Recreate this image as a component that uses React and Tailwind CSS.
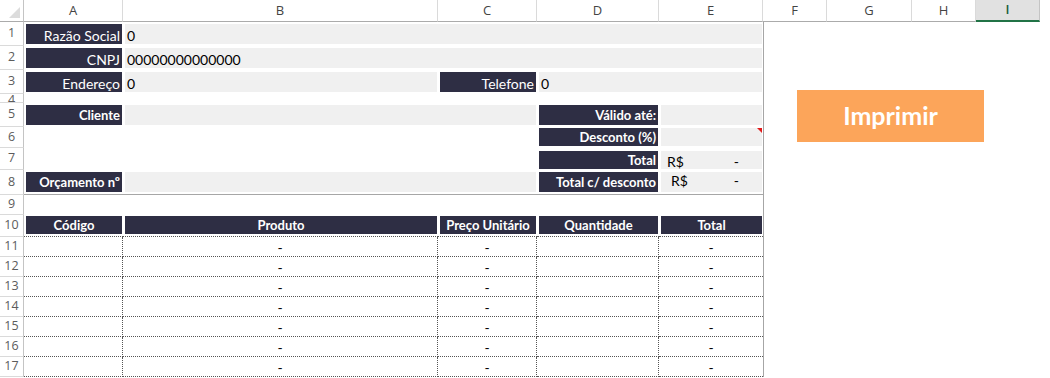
import clsx from 'clsx';

const columns = ['A', 'B', 'C', 'D', 'E', 'F', 'G', 'H', 'I'];

const RowNum = ({ n, className = '' }) => (
  <div
    className={clsx(
      "flex items-center justify-center overflow-hidden border-r border-b border-r-[#c4c4c4] border-b-[#dadada] font-['Open_Sans',sans-serif] text-[12.5px] leading-none text-[#5c5c5c]",
      className
    )}
  >
    {n}
  </div>
);

const Cell = ({ span = '', fill, align = 'left', bold, className = '', inner = '', children }) => (
  <div className={clsx('min-w-0 pl-[2px] pr-px py-[2px]', span, className)}>
    <div
      className={clsx(
        'relative flex h-full items-center overflow-hidden whitespace-nowrap px-[2px] pt-[2px]',
        fill === 'dark' && 'bg-[#2e2e44] text-white',
        fill === 'light' && 'bg-[#f0f0f0] text-black',
        align === 'right' && 'justify-end',
        align === 'center' && 'justify-center',
        bold ? 'text-[13px] font-bold' : 'text-[14px]',
        inner
      )}
    >
      {children}
    </div>
  </div>
);

const Money = ({ pad = 'pl-[4px]' }) => (
  <span className={clsx('flex w-full justify-between pr-[21px]', pad)}>
    <span>R$</span>
    <span>-</span>
  </span>
);

const App = () => {
  const itemRows = [11, 12, 13, 14, 15, 16, 17];

  return (
    <div className="h-[378px] w-[1050px] overflow-hidden bg-white font-['Lato',sans-serif] text-[14px] text-black">
      <div className="grid grid-cols-[24px_99px_315px_99px_122px_104px_64px_85px_64px_64px_1fr] grid-rows-[22px_24px_24px_24px_9px_24px_21px_22px_25px_20px_22px_20px_20px_20px_20px_20px_20px_20px]">
        {/* column headers */}
        <div className="relative border-r border-b border-r-[#c4c4c4] border-b-[#ababab]">
          <svg className="absolute right-[3px] bottom-[3px]" width="11" height="11" viewBox="0 0 11 11">
            <polygon points="11,0 11,11 0,11" fill="#dcdcdc" />
          </svg>
        </div>
        {columns.map((c) => (
          <div
            key={c}
            className={clsx(
              "flex items-center justify-center border-r font-['Open_Sans',sans-serif] text-[13px]",
              c === 'I'
                ? 'border-b-2 border-r-[#c4c4c4] border-b-[#217346] bg-[#e1e1e1] font-semibold text-[#1f5f3c]'
                : 'border-b border-r-[#dadada] border-b-[#ababab] text-[#444]'
            )}
          >
            {c}
          </div>
        ))}
        <div />

        {/* free area right of the form */}
        <div className="col-start-7 col-span-5 row-start-2 row-span-17 border-l border-[#a6a6a6] pt-[68px] pl-[33px]">
          <button className="flex h-[52px] w-[187px] items-center justify-center bg-[#fca55a] text-[25px] font-bold text-white">
            Imprimir
          </button>
        </div>

        {/* row 1 */}
        <RowNum n={1} />
        <Cell fill="dark" align="right">Razão Social</Cell>
        <Cell span="col-span-4" fill="light">0</Cell>

        {/* row 2 */}
        <RowNum n={2} />
        <Cell fill="dark" align="right">CNPJ</Cell>
        <Cell span="col-span-4" fill="light">00000000000000</Cell>

        {/* row 3 */}
        <RowNum n={3} />
        <Cell fill="dark" align="right">Endereço</Cell>
        <Cell fill="light">0</Cell>
        <Cell fill="dark" align="right">Telefone</Cell>
        <Cell span="col-span-2" fill="light">0</Cell>

        {/* row 4 */}
        <RowNum n={4} className="items-start text-[10px] leading-[9px]" />
        <div className="col-span-5" />

        {/* row 5 */}
        <RowNum n={5} />
        <Cell fill="dark" align="right" bold>Cliente</Cell>
        <Cell span="col-span-2" fill="light" />
        <Cell fill="dark" align="right" bold>Válido até:</Cell>
        <Cell fill="light" />

        {/* row 6 */}
        <RowNum n={6} />
        <div className="col-span-3" />
        <Cell fill="dark" align="right" bold className="pt-px">Desconto (%)</Cell>
        <Cell fill="light" className="pt-px">
          <svg className="absolute top-0 right-0" width="5" height="5" viewBox="0 0 5 5">
            <polygon points="0,0 5,0 5,5" fill="#e21b1b" />
          </svg>
        </Cell>

        {/* row 7 */}
        <RowNum n={7} />
        <div className="col-span-3" />
        <Cell fill="dark" align="right" bold className="pt-[3px] pb-px">Total</Cell>
        <Cell fill="light" className="pt-[3px] pb-px"><Money /></Cell>

        {/* row 8 */}
        <RowNum n={8} className="border-b-[#a6a6a6]" />
        <Cell fill="dark" align="right" bold className="border-b border-[#a6a6a6]">Orçamento nº</Cell>
        <Cell span="col-span-2" fill="light" className="border-b border-[#a6a6a6]" />
        <Cell fill="dark" align="right" bold className="border-b border-[#a6a6a6]">Total c/ desconto</Cell>
        <Cell fill="light" inner="items-end pb-[1px]" className="border-b border-[#a6a6a6]">
          <Money pad="pl-[8px]" />
        </Cell>

        {/* row 9 */}
        <RowNum n={9} />
        <div className="col-span-5" />

        {/* row 10: item table header */}
        <RowNum n={10} />
        {['Código', 'Produto', 'Preço Unitário', 'Quantidade', 'Total'].map((h) => (
          <Cell
            key={h}
            fill="dark"
            align="center"
            bold
            className="border-b border-dotted border-[#555] pt-px"
          >
            {h}
          </Cell>
        ))}

        {/* item rows */}
        {itemRows.map((n) => (
          <div key={n} className="contents">
            <RowNum n={n} />
            <div className="border-r border-b border-dotted border-[#555]" />
            <div className="flex items-center justify-center border-r border-b border-dotted border-[#555] pt-[2px]">-</div>
            <div className="flex items-center justify-center border-r border-b border-dotted border-[#555] pt-[2px]">-</div>
            <div className="border-r border-b border-dotted border-[#555]" />
            <div className="flex items-center justify-center border-b border-dotted border-[#555] pt-[2px]">-</div>
          </div>
        ))}
      </div>
    </div>
  );
};

export default App;
